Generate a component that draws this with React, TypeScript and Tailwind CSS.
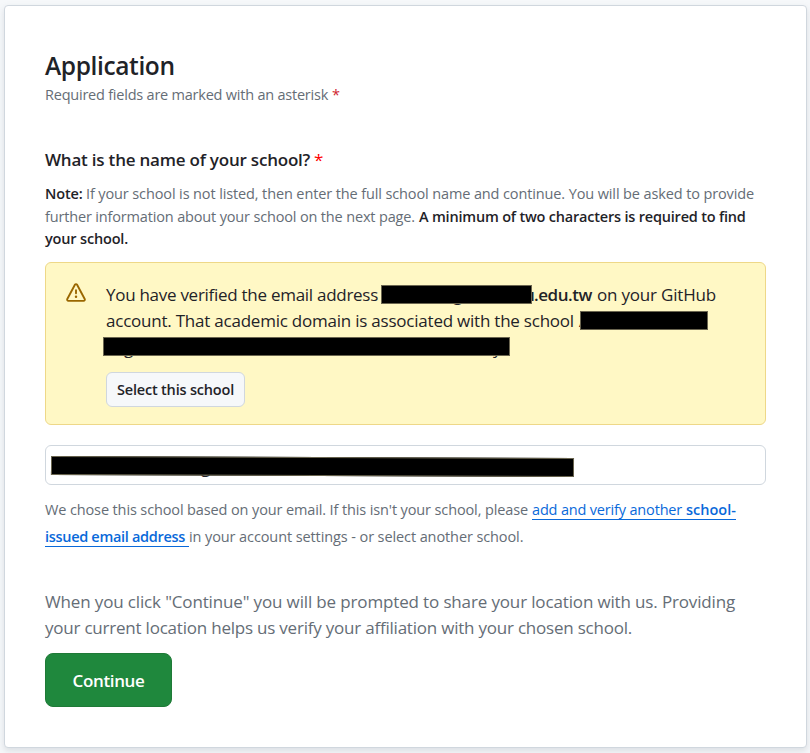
function Redaction({ className }: { className: string }) {
  return <span className={`absolute block border border-[#6b6650] bg-black ${className}`} />;
}

function AlertIcon() {
  return (
    <svg viewBox="0 0 16 16" className="mt-5 ml-5 h-5 w-5 shrink-0 fill-[#9a6700]">
      <path d="M6.457 1.047c.659-1.234 2.427-1.234 3.086 0l6.082 11.378A1.75 1.75 0 0 1 14.082 15H1.918a1.75 1.75 0 0 1-1.543-2.575Zm1.763.707a.25.25 0 0 0-.44 0L1.698 13.132a.25.25 0 0 0 .22.368h12.164a.25.25 0 0 0 .22-.368Zm.53 3.996v2.5a.75.75 0 0 1-1.5 0v-2.5a.75.75 0 0 1 1.5 0ZM9 11a1 1 0 1 1-2 0 1 1 0 0 1 2 0Z" />
    </svg>
  );
}

function Header() {
  return (
    <header className="flex flex-col">
      <h1 className="h-8 text-[24.5px] leading-8 font-semibold tracking-[-0.38px]">Application</h1>
      <p className="mt-0.5 flex h-[22px] text-[14.5px] leading-[22px] text-[#656d76]">
        <span className="w-[287px] tracking-[-0.223px]">Required fields are marked with an asterisk</span>
        <span className="text-[#cf222e]">*</span>
      </p>
    </header>
  );
}

function Note() {
  return (
    <div className="mt-[10px] flex flex-col text-[14.5px] leading-[22.5px] text-[#656d76]">
      <div className="flex">
        <strong className="w-[41px] font-semibold tracking-[-0.16px] text-[#1f2328]">Note:</strong>
        <span className="tracking-[-0.12px]">
          If your school is not listed, then enter the full school name and continue. You will be asked to provide
        </span>
      </div>
      <div className="flex">
        <span className="w-[374px] tracking-[-0.16px]">further information about your school on the next page.</span>
        <strong className="font-semibold tracking-[-0.2px] text-[#1f2328]">
          A minimum of two characters is required to find
        </strong>
      </div>
      <strong className="font-semibold tracking-[-0.17px] text-[#1f2328]">your school.</strong>
    </div>
  );
}

function SchoolAlert() {
  return (
    <section className="mt-[11.5px] flex h-[163px] rounded-md border border-[#eed888] bg-[#fff8c5]">
      <AlertIcon />
      <div className="ml-5 flex flex-col pt-[19px] text-[17px] leading-[26.25px]">
        <div className="relative flex h-[26.25px]">
          <span className="w-[423px] tracking-[-0.277px]">You have verified the email address</span>
          <b className="absolute left-[347px] font-semibold">g</b>
          <b className="absolute left-[418px] font-semibold">u</b>
          <Redaction className="top-[3px] left-[275px] h-[19px] w-[151px]" />
          <b className="ml-[5px] w-[63px] font-semibold tracking-[-0.44px]">.edu.tw</b>
          <span className="tracking-[-0.19px]">on your GitHub</span>
        </div>
        <div className="relative flex h-[26.25px]">
          <span className="tracking-[-0.225px]">account. That academic domain is associated with the school</span>
          <span className="absolute left-[473px]">A</span>
          <Redaction className="top-[3px] left-[474px] h-[19px] w-[128px]" />
        </div>
        <div className="relative h-[26.25px]">
          <span className="absolute left-[18px]">g</span>
          <span className="absolute left-[387px]">y</span>
          <Redaction className="top-[2.5px] left-[-3px] h-[19px] w-[407px]" />
        </div>
        <button className="mt-[11px] h-[35px] w-[139px] rounded-md border border-[#d0d7de] bg-[#f6f8fa] text-[14.5px] leading-[33px] font-semibold tracking-[-0.19px]">
          Select this school
        </button>
      </div>
    </section>
  );
}

function SchoolField() {
  return (
    <div className="relative mt-5 h-10 rounded-md border border-[#d0d7de] bg-white text-[17px] leading-[38px]">
      <span className="absolute top-0.5 left-[155px]">g</span>
      <span className="absolute top-0.5 left-[510px]">y</span>
      <Redaction className="top-[11px] left-[5px] h-[19px] w-[523px] rotate-[0.2deg]" />
    </div>
  );
}

function HelpText() {
  return (
    <div className="mt-[11px] flex flex-col text-[14.5px] leading-[27px] text-[#656d76]">
      <div className="flex h-[27px] items-start">
        <span className="w-[487px] tracking-[-0.123px]">
          We chose this school based on your email. If this isn't your school, please
        </span>
        <a className="flex h-6 w-[204px] border-b border-[#0969da] text-[#0969da]">
          <span className="w-[154px] tracking-[-0.17px]">add and verify another</span>
          <b className="font-semibold">school-</b>
        </a>
      </div>
      <div className="flex h-[27px] items-start">
        <a className="h-6 w-[144px] border-b border-[#0969da] font-semibold tracking-[-0.31px] text-[#0969da]">
          issued email address
        </a>
        <span className="tracking-[-0.1px]">in your account settings - or select another school.</span>
      </div>
    </div>
  );
}

export default function App() {
  return (
    <div className="h-[753px] w-[810px] overflow-hidden bg-[#f6f8fa] pt-[5px] pl-1 font-['Open_Sans','Noto_Sans',sans-serif] whitespace-nowrap text-[#1f2328]">
      <main className="h-[743px] w-[803px] rounded-[4px] border border-[#d0d7de] bg-white pt-11 pr-10 pl-10 shadow-[0_3px_6px_rgba(140,149,159,0.25)]">
        <Header />
        <h2 className="mt-[41px] flex h-[26px] text-[17px] leading-[26px] font-semibold">
          <span className="w-[269px] tracking-[-0.21px]">What is the name of your school?</span>
          <span className="font-normal text-[#ff0000]">*</span>
        </h2>
        <Note />
        <SchoolAlert />
        <SchoolField />
        <HelpText />
        <p className="mt-[39px] flex flex-col text-[17px] leading-[26.25px] text-[#656d76]">
          <span className="tracking-[-0.145px]">
            When you click "Continue" you will be prompted to share your location with us. Providing
          </span>
          <span className="tracking-[-0.218px]">
            your current location helps us verify your affiliation with your chosen school.
          </span>
        </p>
        <button className="mt-[11px] h-[54px] w-[127px] rounded-lg border border-[#1f7a37] bg-[#1f883d] pt-0.5 text-[17px] font-semibold tracking-[-0.35px] text-white">
          Continue
        </button>
      </main>
    </div>
  );
}
